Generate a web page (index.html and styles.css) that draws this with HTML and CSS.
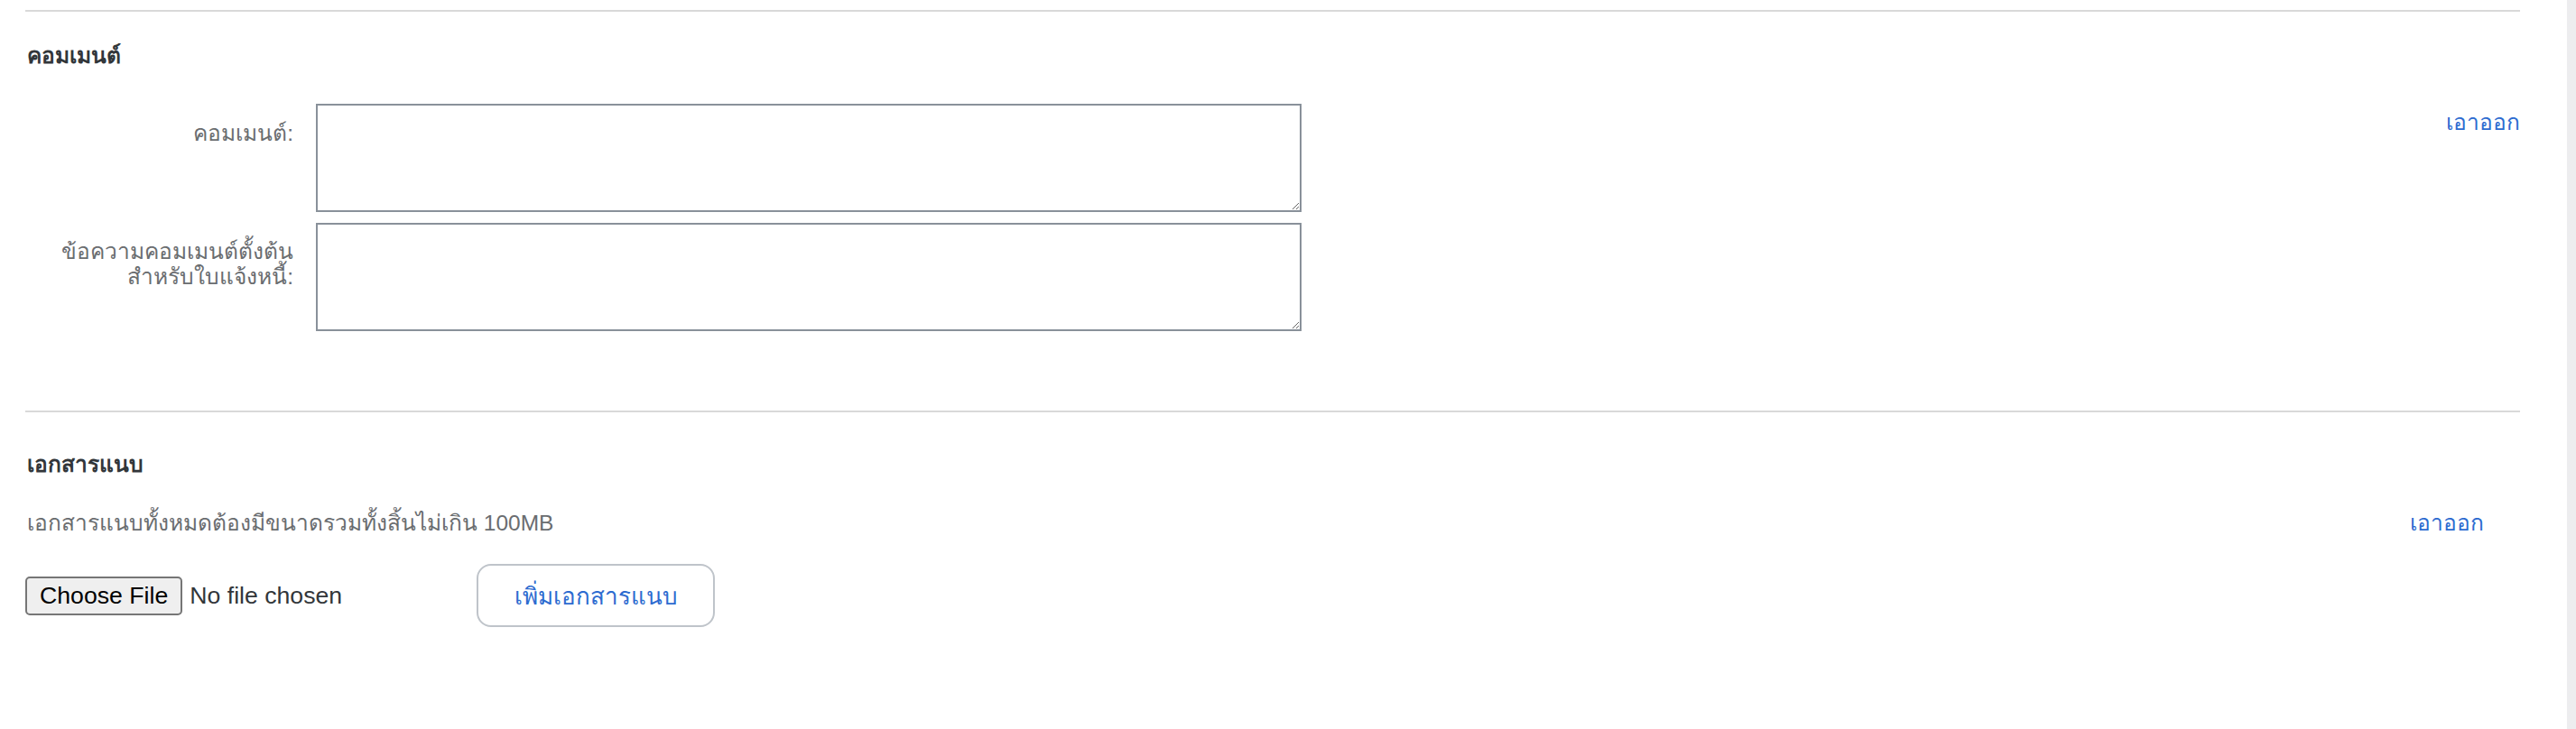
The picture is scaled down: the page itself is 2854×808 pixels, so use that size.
FILE: index.html
```html
<!DOCTYPE html>
<html lang="th">
<head>
<meta charset="utf-8">
<title>คอมเมนต์</title>
<link rel="stylesheet" href="styles.css">
</head>
<body>
<div class="page">
  <main class="content">
    <section class="section comments">
      <h2 class="section-title">คอมเมนต์</h2>
      <div class="comment-grid">
        <div class="fields">
          <div class="field-row">
            <label class="field-label" for="c1">คอมเมนต์:</label>
            <textarea id="c1" class="field-input"></textarea>
          </div>
          <div class="field-row">
            <label class="field-label two-line" for="c2">ข้อความคอมเมนต์ตั้งต้น<br>สำหรับใบแจ้งหนี้:</label>
            <textarea id="c2" class="field-input"></textarea>
          </div>
        </div>
        <a class="remove-link" href="#">เอาออก</a>
      </div>
    </section>
    <section class="section attachments">
      <h2 class="section-title">เอกสารแนบ</h2>
      <div class="attach-info">
        <p class="attach-note">เอกสารแนบทั้งหมดต้องมีขนาดรวมทั้งสิ้นไม่เกิน 100MB</p>
        <a class="remove-link second" href="#">เอาออก</a>
      </div>
      <div class="upload-row">
        <input type="file" class="file-input">
        <button type="button" class="add-button">เพิ่มเอกสารแนบ</button>
      </div>
    </section>
  </main>
  <div class="side-strip"></div>
</div>
</body>
</html>
```
FILE: styles.css
```css
html, body {
  margin: 0;
  padding: 0;
  background: #ffffff;
}
body {
  font-family: "Liberation Sans", "Noto Sans", sans-serif;
  color: #32363a;
}
.page {
  display: flex;
  min-height: 808px;
}
.content {
  flex: 1;
  padding: 0 52px 0 28px;
}
.side-strip {
  width: 10px;
  background: #ededef;
}
.section {
  border-top: 2px solid #d9d9d9;
}
.comments {
  margin-top: 11px;
  padding-bottom: 88px;
}
.section-title {
  margin: 0;
  font-size: 24.5px;
  font-weight: bold;
  color: #32363a;
  line-height: 30px;
  padding: 34px 0 0 2px;
}
.comment-grid {
  display: flex;
  justify-content: space-between;
  margin-top: 38px;
}
.fields {
  display: flex;
  flex-direction: column;
  gap: 12px;
}
.field-row {
  display: flex;
  gap: 25px;
}
.field-label {
  width: 297px;
  text-align: right;
  font-size: 24.5px;
  line-height: 28px;
  color: #6a6d70;
  padding-top: 19px;
}
.field-label.two-line {
  padding-top: 18px;
}
.field-input {
  width: 1092px;
  height: 120px;
  box-sizing: border-box;
  border: 2px solid #89919a;
  margin: 0;
  padding: 6px;
  font-family: inherit;
  font-size: 24px;
  resize: both;
}
.remove-link {
  font-size: 24.5px;
  color: #2d6bd0;
  text-decoration: none;
  line-height: 28px;
  padding-top: 7px;
}
.attachments .section-title {
  padding-top: 43px;
}
.attach-info {
  display: flex;
  justify-content: space-between;
  align-items: center;
  margin-top: 36px;
}
.attach-note {
  margin: 0;
  padding-left: 2px;
  font-size: 24.5px;
  line-height: 28px;
  color: #6a6d70;
}
.remove-link.second {
  padding: 0 40px 0 0;
}
.upload-row {
  display: flex;
  align-items: center;
  margin-top: 31px;
}
.file-input {
  zoom: 2;
  width: 250px;
  margin: 0;
  font-family: "Liberation Sans", sans-serif;
  color: #32363a;
}
.add-button {
  width: 264px;
  height: 70px;
  box-sizing: border-box;
  background: #ffffff;
  border: 2px solid #bfc4ca;
  border-radius: 16px;
  font-family: inherit;
  font-size: 26px;
  color: #2d6bd0;
  cursor: pointer;
}
```
